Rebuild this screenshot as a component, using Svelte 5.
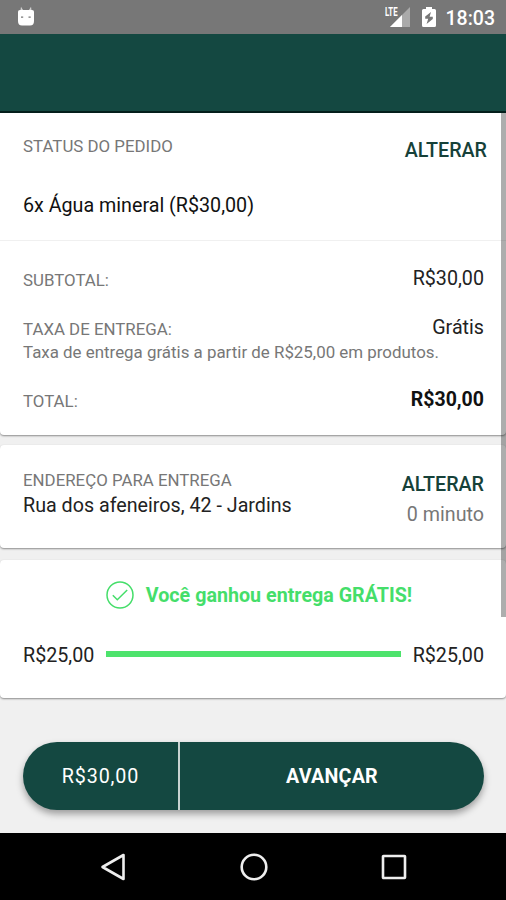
<script>
  const price = 'R$30,00';
  const goal = 'R$25,00';
</script>

<div class="screen">
  <header class="status">
    <svg class="droid" width="18" height="22" viewBox="0 0 18 22">
      <path d="M3.200 6 4 .8l2.200 3.400h5.600L14 .8l.8 5.200z" fill="#d2d2d2" />
      <path d="M1 5.500Q1 4 3 4h12q2 0 2 1.500V15q0 4.500-4 4.500H5Q1 19.500 1 15z" fill="#fff" />
      <path d="M4 11.200h2.200M11.500 11.200h2.200" stroke="#777" stroke-width="1.300" />
    </svg>
    <div class="indicators">
      <span class="network">
        <svg width="20" height="20" viewBox="0 0 20 20">
          <path d="M20 0V20H0z" fill="#aaa" />
          <path d="M12 8V20H0z" fill="#fff" />
        </svg>
        <b>LTE</b>
      </span>
      <svg class="battery" width="14" height="20" viewBox="0 0 14 20">
        <path d="M4 0h6v2h2.500q1.500 0 1.500 1.500v15Q14 20 12.500 20h-11Q0 20 0 18.500v-15Q0 2 1.500 2H4z" fill="#fff" />
        <path d="M9 5 3.200 9.500v2.200h3L4.600 17l6.200-5V9.800H7.600z" fill="#777" />
      </svg>
      <span class="clock">18:03</span>
    </div>
  </header>
  <div class="appbar"></div>

  <main>
    <section class="card order">
      <div class="row order-head">
        <span class="label">STATUS DO PEDIDO</span>
        <span class="action">ALTERAR</span>
      </div>
      <div class="item">6x Água mineral (R$30,00)</div>
      <div class="totals">
        <div class="row"><span class="label">SUBTOTAL:</span><span class="value">{price}</span></div>
        <div class="row fee"><span class="label">TAXA DE ENTREGA:</span><span class="value">Grátis</span></div>
        <div class="note">Taxa de entrega grátis a partir de R$25,00 em produtos.</div>
        <div class="row total"><span class="label">TOTAL:</span><span class="value bold">{price}</span></div>
      </div>
    </section>

    <section class="card address row">
      <div class="place">
        <span class="label">ENDEREÇO PARA ENTREGA</span>
        <span class="street">Rua dos afeneiros, 42 - Jardins</span>
      </div>
      <div class="eta">
        <span class="action">ALTERAR</span>
        <span class="minutes">0 minuto</span>
      </div>
    </section>

    <section class="card promo">
      <div class="won">
        <svg width="28" height="28" viewBox="0 0 28 28" fill="none" stroke="#45de6a" stroke-width="1.500">
          <circle cx="14" cy="14" r="13" />
          <path d="M6.800 14.200 11.300 18.800 21.200 9" />
        </svg>
        <span>Você ganhou entrega GRÁTIS!</span>
      </div>
      <div class="progress">
        <span>{goal}</span>
        <div class="track"></div>
        <span>{goal}</span>
      </div>
    </section>

    <div class="checkout">
      <span class="sum">{price}</span>
      <span class="next">AVANÇAR</span>
    </div>
    <div class="scrollbar"></div>
  </main>

  <nav>
    <svg width="28" height="28" viewBox="0 0 28 28"><path d="M24.500 2V26L3.500 14z" /></svg>
    <svg width="28" height="28" viewBox="0 0 28 28"><circle cx="14" cy="14" r="12.300" /></svg>
    <svg width="28" height="28" viewBox="0 0 28 28"><rect x="3" y="3" width="22" height="22" rx=".5" /></svg>
  </nav>
</div>

<style>
  .screen {
    width: 506px;
    height: 900px;
    overflow: hidden;
    display: flex;
    flex-direction: column;
    background: #f0f0f0;
    font-family: Roboto, "Liberation Sans", sans-serif;
    font-size: 19.700px;
    line-height: 24px;
    color: #222;
    white-space: nowrap;
  }
  svg { display: block; flex: none; }
  .status {
    height: 34px;
    flex: none;
    box-sizing: border-box;
    display: flex;
    justify-content: space-between;
    padding: 0 11px 0 17px;
    background: #777;
    color: #fff;
  }
  .droid { margin-top: 6px; }
  .indicators { display: flex; }
  .network { position: relative; margin: 7px 12px 0 0; }
  .network b {
    position: absolute;
    left: -5px;
    top: 0;
    font: 700 12px/10px Roboto, sans-serif;
    transform: scaleX(.65);
    transform-origin: left;
  }
  .battery { margin: 7px 10px 0 0; }
  .clock { line-height: 37px; font-size: 19.500px; font-weight: 500; }
  .appbar {
    height: 79px;
    flex: none;
    box-sizing: border-box;
    background: #144841;
    border-bottom: 2px solid #041f1b;
  }
  main { position: relative; height: 720px; flex: none; }
  .card {
    box-sizing: border-box;
    background: #fff;
    border-radius: 4px;
    box-shadow: 0 1px 2px rgba(0, 0, 0, .42);
  }
  .row { display: flex; justify-content: space-between; align-items: flex-start; }
  .label { font-size: 16.850px; color: #777; }
  .action { font-weight: 500; color: #164139; }
  .value { color: #222; }
  .bold { font-weight: 700; font-size: 19.500px; color: #111; }
  .order { height: 322px; border-radius: 0 0 4px 4px; padding-top: 21px; }
  .order-head { padding: 0 19px 0 23px; }
  .order-head .action { margin-top: 5px; }
  .item { margin-top: 31px; padding: 0 23px 22px; border-bottom: 1px solid #f0f0f0; color: #111; }
  .totals { padding: 26px 22px 0 23px; }
  .totals .label { margin-top: 1px; }
  .fee { margin-top: 24px; }
  .note { font-size: 16.900px; line-height: 20px; margin-top: 1px; color: #777; }
  .total { margin-top: 26px; }
  .address { height: 103px; margin-top: 10px; padding: 23px 22px 0 23px; }
  .place, .eta { display: flex; flex-direction: column; }
  .place .street { margin-top: 2px; color: #222; }
  .eta { align-items: flex-end; padding-top: 5px; }
  .minutes { margin-top: 6px; color: #777; }
  .promo { height: 138px; margin-top: 12px; padding: 21px 22px 0 23px; }
  .won {
    display: flex;
    justify-content: center;
    align-items: center;
    gap: 12px;
    height: 28px;
    padding-left: 11px;
    font-weight: 700;
    color: #45de6a;
  }
  .won span { padding-top: 2px; }
  .progress { display: flex; align-items: center; margin-top: 33px; }
  .progress span { padding-top: 2px; }
  .track { flex: 1; height: 6px; margin: -2px 12px 0; background: #4de36c; }
  .checkout {
    display: flex;
    height: 68px;
    margin: 43px 22px 0 23px;
    border-radius: 34px;
    background: #144841;
    box-shadow: 0 4px 7px rgba(0, 0, 0, .35);
    color: #fff;
    line-height: 70px;
    text-align: center;
    margin-top: 44px;
  }
  .sum { width: 155px; border-right: 2px solid #c8d2d0; letter-spacing: .9px; height: 68px; }
  .next { flex: 1; font-weight: 700; letter-spacing: .2px; height: 68px; }
  .scrollbar {
    position: absolute;
    right: 0;
    top: 0;
    width: 5px;
    height: 504px;
    background: rgba(0, 0, 0, .32);
  }
  nav {
    flex: 1;
    display: flex;
    justify-content: space-between;
    align-items: center;
    padding: 0 98px 0 99px;
    background: #000;
  }
  nav svg { fill: none; stroke: #eee; stroke-width: 2.600; stroke-linejoin: round; }
</style>
